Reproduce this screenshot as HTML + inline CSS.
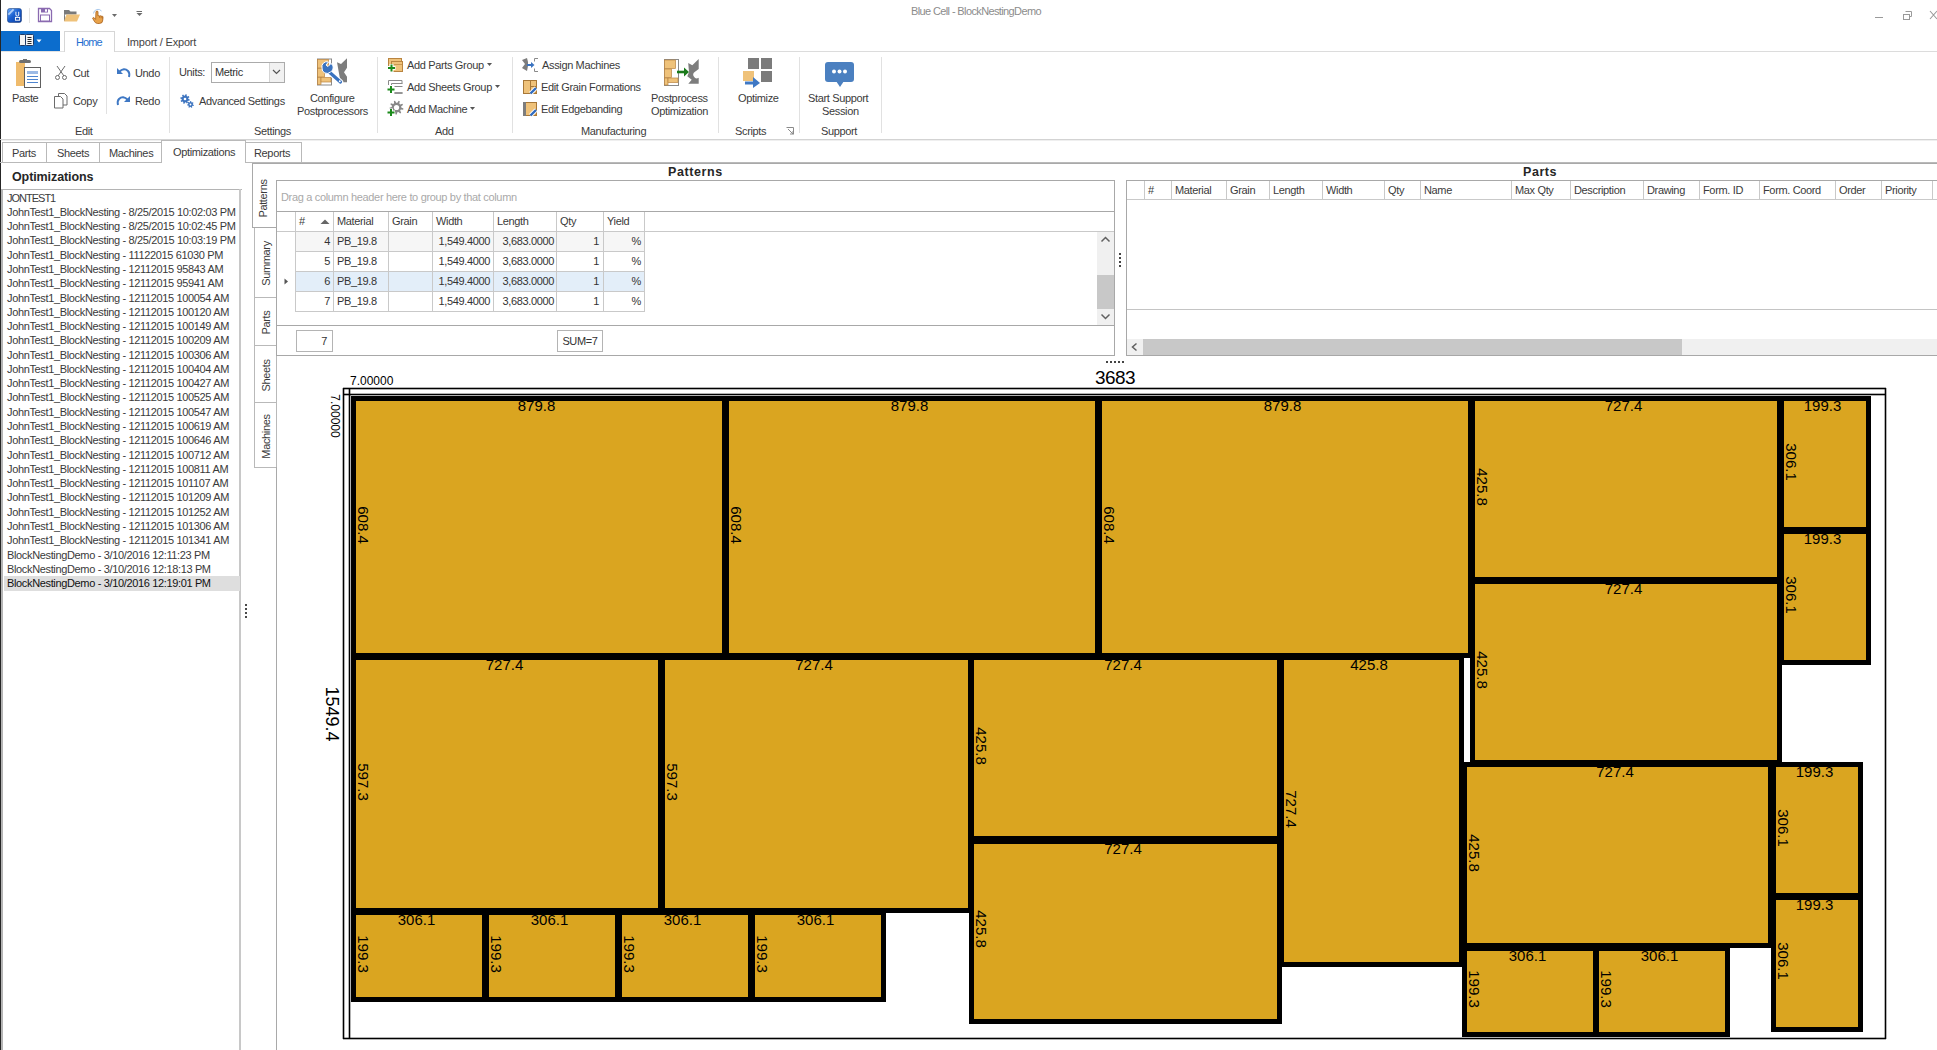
<!DOCTYPE html>
<html><head><meta charset="utf-8"><title>Blue Cell - BlockNestingDemo</title>
<style>
html,body{margin:0;padding:0;}
body{width:1937px;height:1050px;position:relative;overflow:hidden;background:#fff;font-family:"Liberation Sans", sans-serif;font-size:11px;color:#3c3c3c;}
body div{position:absolute;box-sizing:border-box;}
.t{white-space:pre;line-height:13px;letter-spacing:-0.35px;}
.b{font-weight:bold;}
</style></head><body>

<div style="left:0px;top:0px;width:1px;height:1050px;background:#262626;"></div>
<svg style="position:absolute;left:7px;top:8px" width="15" height="15" viewBox="0 0 16 16">
<defs><linearGradient id="ai" x1="0" y1="0" x2="1" y2="1"><stop offset="0" stop-color="#6fb0ff"/><stop offset="0.45" stop-color="#1a5fd0"/><stop offset="1" stop-color="#0b3a9a"/></linearGradient></defs>
<rect x="0.5" y="0.5" width="15" height="15" rx="2.5" fill="url(#ai)" stroke="#1c3f7a" stroke-width="0.6"/>
<path d="M1.5 7 L7 1.5" stroke="#cfe4ff" stroke-width="2" opacity="0.8"/>
<path d="M9.5 4 v4 M12.5 4 v4 M9.5 8 q1.5 1.2 3 0" stroke="#fff" stroke-width="1" fill="none"/>
<rect x="9" y="10" width="4.5" height="3" fill="none" stroke="#fff" stroke-width="1"/>
</svg>
<div style="left:29px;top:8px;width:1px;height:15px;background:#e3e3e3;"></div>
<svg style="position:absolute;left:37px;top:7px" width="16" height="16" viewBox="0 0 16 16">
<path d="M1.5 1.5 h11 l2 2 v11 h-13 z" fill="#fff" stroke="#8a6ab0" stroke-width="1.3"/>
<rect x="4" y="1.5" width="7" height="4" fill="#8a6ab0"/><rect x="8" y="2.3" width="2" height="2.4" fill="#fff"/>
<rect x="3.5" y="8" width="9" height="6" fill="#fff" stroke="#8a6ab0" stroke-width="1"/>
</svg>
<svg style="position:absolute;left:63px;top:8px" width="18" height="15" viewBox="0 0 18 15">
<path d="M1 2 h5 l1.5 1.5 h6 v3 H1 z" fill="#7a7a7a"/><path d="M1 3 v10 h2 z" fill="#7a7a7a"/>
<path d="M3.5 6.5 h13.5 l-3 7 H1 z" fill="#efc27a"/>
</svg>
<svg style="position:absolute;left:91px;top:7px" width="15" height="17" viewBox="0 0 15 17">
<path d="M2.5 6.5 A4.5 4.5 0 0 1 10.5 4" fill="none" stroke="#a9c9ec" stroke-width="1"/>
<path d="M5 4.5 q1-1 2 0 v4.5 q.8-.8 1.6 0 q.8-.7 1.6 .2 q.9-.6 1.6 .4 v3.4 q0 3.5 -3.6 3.5 h-1.6 q-2.2 0 -3.4 -2.4 l-1.6 -3 q.6-.9 1.6-.3 l1.4 1.6 z" fill="#e8a24a" stroke="#a8601a" stroke-width=".8"/>
<path d="M8.6 9 v2 M10.2 9.2 v2 M11.8 9.6 v2" stroke="#a8601a" stroke-width=".6"/>
</svg>
<svg style="position:absolute;left:112px;top:14px" width="6" height="4"><path d="M0 0h5l-2.5 3z" fill="#6b6b6b"/></svg>
<svg style="position:absolute;left:136px;top:11px" width="7" height="7"><path d="M0.5 0.5h5.5" stroke="#6b6b6b" stroke-width="1"/><path d="M0.5 2h6l-3 3z" fill="#6b6b6b"/></svg>
<div class="t" style="left:911px;top:5px;color:#8c8c8c;font-size:11px;letter-spacing:-0.62px;">Blue Cell - BlockNestingDemo</div>
<div style="left:1875px;top:17px;width:8px;height:1px;background:#9a9a9a;"></div>
<svg style="position:absolute;left:1902px;top:10px" width="11" height="11" viewBox="0 0 11 11">
<path d="M3.5 1.5 h6 v5 h-1.5" fill="none" stroke="#9a9a9a" stroke-width="1"/>
<rect x="1.5" y="4.5" width="6" height="5" fill="none" stroke="#9a9a9a" stroke-width="1"/>
</svg>
<svg style="position:absolute;left:1929px;top:10px" width="8" height="10" viewBox="0 0 8 10">
<path d="M1 1 L8 9 M1 9 L8 1" stroke="#9a9a9a" stroke-width="1.1"/>
</svg>
<div style="left:1px;top:31px;width:59px;height:21px;background:#0c6dcd;"></div>
<svg style="position:absolute;left:18px;top:33px" width="26" height="14" viewBox="0 0 26 14"><rect x="1.5" y="1.5" width="6" height="11" rx="1" fill="#f4f4f4" stroke="#1d3a66" stroke-width="1"/><rect x="7.5" y="1.5" width="8" height="11" rx="1" fill="#f4f4f4" stroke="#1d3a66" stroke-width="1"/><path d="M9.5 4.5h4M9.5 6.5h4M9.5 8.5h4M9.5 10.5h4" stroke="#2b2b2b" stroke-width="1"/><path d="M18.5 6.5h5l-2.5 3z" fill="#fff"/></svg>
<div style="left:1px;top:51px;width:63px;height:1px;background:#e2e2e2;"></div>
<div style="left:114px;top:51px;width:1823px;height:1px;background:#dcdcdc;"></div>
<div style="left:64px;top:31px;width:51px;height:21px;border:1px solid #d6d6d6;border-bottom:none;background:#fff;"></div>
<div class="t" style="left:76px;top:36px;font-size:11px;line-height:13px;color:#1f6fd0;letter-spacing:-0.9px;">Home</div>
<div class="t" style="left:127px;top:36px;font-size:11px;line-height:13px;color:#444;letter-spacing:-0.2px;">Import / Export</div>
<div style="left:0px;top:139px;width:1937px;height:1px;background:#d3d3d3;"></div>
<div style="left:1px;top:140px;width:1936px;height:1px;background:#efefef;"></div>
<div style="left:106px;top:60px;width:1px;height:54px;background:#e1e1e1;"></div>
<div style="left:169px;top:57px;width:1px;height:76px;background:#e1e1e1;"></div>
<div style="left:377px;top:57px;width:1px;height:76px;background:#e1e1e1;"></div>
<div style="left:512px;top:57px;width:1px;height:76px;background:#e1e1e1;"></div>
<div style="left:718px;top:57px;width:1px;height:76px;background:#e1e1e1;"></div>
<div style="left:799px;top:57px;width:1px;height:76px;background:#e1e1e1;"></div>
<div style="left:881px;top:57px;width:1px;height:76px;background:#e1e1e1;"></div>
<svg style="position:absolute;left:15px;top:59px" width="28" height="31" viewBox="0 0 28 31"><rect x="1" y="3" width="9" height="24" fill="#efbb6c"/><rect x="4" y="1" width="12" height="3" rx="1.5" fill="#6f6f6f"/><rect x="8" y="0" width="4" height="2" fill="#6f6f6f"/><rect x="9.5" y="8.5" width="16" height="20" fill="#fff" stroke="#5f5f5f" stroke-width="1"/><rect x="12" y="12" width="11" height="3" fill="#9dbbe6"/><path d="M12 17.5h11M12 20.5h11M12 23.5h11" stroke="#4f85cf" stroke-width="1"/></svg>
<div class="t" style="left:12px;top:92px;font-size:11px;line-height:13px;color:#3b3b3b;">Paste</div>
<svg style="position:absolute;left:54px;top:65px" width="14" height="16" viewBox="0 0 14 16"><path d="M3 1 L10 11 M11 1 L4 11" stroke="#6b6b6b" stroke-width="1"/><circle cx="3.5" cy="12.5" r="2" fill="none" stroke="#6b6b6b" stroke-width="1"/><circle cx="10.5" cy="12.5" r="2" fill="none" stroke="#6b6b6b" stroke-width="1"/></svg>
<div class="t" style="left:73px;top:67px;font-size:11px;line-height:13px;color:#3b3b3b;">Cut</div>
<svg style="position:absolute;left:53px;top:92px" width="16" height="18" viewBox="0 0 16 18"><path d="M5.5 1.5h6l2.5 2.5v9h-8.5z" fill="#fff" stroke="#6b6b6b" stroke-width="1"/><path d="M1.5 4.5h6l2.5 2.5v9h-8.5z" fill="#fff" stroke="#6b6b6b" stroke-width="1"/></svg>
<div class="t" style="left:73px;top:95px;font-size:11px;line-height:13px;color:#3b3b3b;">Copy</div>
<svg style="position:absolute;left:116px;top:67px" width="16" height="12" viewBox="0 0 16 12"><path d="M3 5 Q8 0 12 4 Q14 6 13 10" fill="none" stroke="#3f78c4" stroke-width="2"/><path d="M1 1 v6 h6 z" fill="#3f78c4"/></svg>
<div class="t" style="left:135px;top:67px;font-size:11px;line-height:13px;color:#3b3b3b;">Undo</div>
<svg style="position:absolute;left:115px;top:95px" width="16" height="12" viewBox="0 0 16 12"><path d="M13 5 Q8 0 4 4 Q2 6 3 10" fill="none" stroke="#3f78c4" stroke-width="2"/><path d="M15 1 v6 h-6 z" fill="#3f78c4"/></svg>
<div class="t" style="left:135px;top:95px;font-size:11px;line-height:13px;color:#3b3b3b;">Redo</div>
<div class="t" style="left:75px;top:125px;font-size:11px;line-height:13px;color:#3b3b3b;">Edit</div>
<div class="t" style="left:179px;top:66px;font-size:11px;line-height:13px;color:#3b3b3b;">Units:</div>
<div style="left:211px;top:62px;width:74px;height:21px;border:1px solid #ababab;background:#fff;"></div>
<div style="left:269px;top:63px;width:15px;height:19px;background:#f1f1f1;border-left:1px solid #d4d4d4;"></div>
<svg style="position:absolute;left:272px;top:69px" width="9" height="6" viewBox="0 0 9 6"><path d="M1 1 L4.5 4.5 L8 1" fill="none" stroke="#555" stroke-width="1.2"/></svg>
<div class="t" style="left:215px;top:66px;font-size:11px;line-height:13px;color:#333;">Metric</div>
<svg style="position:absolute;left:180px;top:94px" width="14" height="14" viewBox="0 0 14 14"><polygon points="8.40,5.00 9.77,5.56 9.43,6.84 7.97,6.66 7.40,7.40 7.97,8.77 6.84,9.43 5.92,8.27 5.00,8.40 4.44,9.77 3.16,9.43 3.34,7.97 2.60,7.40 1.23,7.97 0.57,6.84 1.73,5.92 1.60,5.00 0.23,4.44 0.57,3.16 2.03,3.34 2.60,2.60 2.03,1.23 3.16,0.57 4.08,1.73 5.00,1.60 5.56,0.23 6.84,0.57 6.66,2.03 7.40,2.60 8.77,2.03 9.43,3.16 8.27,4.08" fill="#3d74bf"/><circle cx="5" cy="5" r="1.3" fill="#fff"/><polygon points="12.90,10.50 13.87,10.96 13.56,11.98 12.50,11.82 12.00,12.38 12.24,13.42 11.26,13.81 10.72,12.89 9.97,12.84 9.31,13.68 8.38,13.16 8.77,12.16 8.34,11.54 7.27,11.55 7.10,10.50 8.12,10.18 8.34,9.46 7.66,8.63 8.38,7.84 9.27,8.44 9.97,8.16 10.20,7.11 11.26,7.19 11.34,8.25 12.00,8.62 12.96,8.15 13.56,9.02 12.78,9.76" fill="#3d74bf"/><circle cx="10.5" cy="10.5" r="0.9" fill="#fff"/></svg>
<div class="t" style="left:199px;top:95px;font-size:11px;line-height:13px;color:#3b3b3b;">Advanced Settings</div>
<svg style="position:absolute;left:316px;top:57px" width="33" height="31" viewBox="0 0 33 31"><g transform="translate(1 1.5)"><rect x="0.5" y="0.5" width="14" height="26" fill="#fff" stroke="#8a8a8a" stroke-width="1"/><rect x="0.5" y="1" width="11" height="8.5" fill="#efc27a" stroke="#b98440" stroke-width="0.7"/><rect x="0.5" y="10" width="7" height="8.5" fill="#efc27a" stroke="#b98440" stroke-width="0.7"/><rect x="0.5" y="19" width="3.5" height="7" fill="#efc27a" stroke="#b98440" stroke-width="0.7"/><rect x="4" y="19" width="10" height="4.5" fill="#efc27a" stroke="#b98440" stroke-width="0.7"/></g><path d="M21 5.3 L25 7 L31 1.3 V10.7 L28 15.3 L31 19.7 V29 V25.3 H21.5 L24 22 Z" fill="#7d7d7d"/><path d="M11 13 L24.5 25" stroke="#fff" stroke-width="5.5" stroke-linecap="round"/><path d="M11 13 L24.5 25" stroke="#3a73c0" stroke-width="3.2" stroke-linecap="round"/><circle cx="23.8" cy="24.3" r="1" fill="#fff"/><path d="M6 11 A5 5 0 0 0 14.5 15 A5 5 0 0 0 15 6.5 L12 9.5 L10 8 L12.5 5 A5 5 0 0 0 6 11 Z" fill="#3a73c0" stroke="#fff" stroke-width="1"/></svg>
<div class="t" style="left:310px;top:92px;font-size:11px;line-height:13px;color:#3b3b3b;">Configure</div>
<div class="t" style="left:297px;top:105px;font-size:11px;line-height:13px;color:#3b3b3b;">Postprocessors</div>
<div class="t" style="left:254px;top:125px;font-size:11px;line-height:13px;color:#3b3b3b;">Settings</div>
<svg style="position:absolute;left:386px;top:57px" width="18" height="17" viewBox="0 0 18 17"><rect x="2.5" y="1.5" width="13" height="9" fill="#efc27a" stroke="#b98440" stroke-width="1"/><rect x="5.5" y="4.5" width="11" height="10" fill="#efc27a" stroke="#b98440" stroke-width="1"/><path d="M5.5 7.5h11" stroke="#b98440" stroke-width="0.7"/><path d="M5.5 7 v8 M1.5 11 h8" stroke="#fff" stroke-width="4"/><path d="M5.5 7.5 v7 M2.0 11 h7" stroke="#1b8a1b" stroke-width="2"/></svg>
<div class="t" style="left:407px;top:59px;font-size:11px;line-height:13px;color:#3b3b3b;">Add Parts Group</div>
<svg style="position:absolute;left:487px;top:63px" width="6" height="4" viewBox="0 0 6 4"><path d="M0 0h5l-2.5 3z" fill="#555"/></svg>
<svg style="position:absolute;left:386px;top:77px" width="18" height="18" viewBox="0 0 18 18"><path d="M2.5 8 V3.5 H16 V6.5 M5.5 8 V6.5 H16.5 M8.5 9.5 H16.5 M8.5 16 H16.5" fill="none" stroke="#8a8a8a" stroke-width="1"/><path d="M8.5 16 H16.5" stroke="#8a8a8a" stroke-width="1.6"/><path d="M5 8.5 v8 M1 12.5 h8" stroke="#fff" stroke-width="4"/><path d="M5 9.0 v7 M1.5 12.5 h7" stroke="#1b8a1b" stroke-width="2"/></svg>
<div class="t" style="left:407px;top:81px;font-size:11px;line-height:13px;color:#3b3b3b;">Add Sheets Group</div>
<svg style="position:absolute;left:495px;top:85px" width="6" height="4" viewBox="0 0 6 4"><path d="M0 0h5l-2.5 3z" fill="#555"/></svg>
<svg style="position:absolute;left:386px;top:100px" width="18" height="18" viewBox="0 0 18 18"><polygon points="15.30,7.50 17.43,8.47 17.16,9.66 14.81,9.60 14.18,10.59 15.18,12.70 14.21,13.44 12.45,11.89 11.33,12.23 10.74,14.50 9.53,14.43 9.18,12.11 8.10,11.66 6.19,13.02 5.30,12.18 6.52,10.18 5.99,9.14 3.65,8.96 3.50,7.74 5.73,7.00 5.99,5.86 4.32,4.21 4.98,3.19 7.17,4.05 8.10,3.34 7.88,1.01 9.04,0.65 10.17,2.71 11.33,2.77 12.66,0.84 13.79,1.32 13.32,3.62 14.18,4.41 16.44,3.79 16.99,4.88 15.16,6.34" fill="#888"/><circle cx="10.5" cy="7.5" r="2.6" fill="#fff"/><path d="M5 8.5 v8 M1 12.5 h8" stroke="#fff" stroke-width="4"/><path d="M5 9.0 v7 M1.5 12.5 h7" stroke="#1b8a1b" stroke-width="2"/></svg>
<div class="t" style="left:407px;top:103px;font-size:11px;line-height:13px;color:#3b3b3b;">Add Machine</div>
<svg style="position:absolute;left:470px;top:107px" width="6" height="4" viewBox="0 0 6 4"><path d="M0 0h5l-2.5 3z" fill="#555"/></svg>
<div class="t" style="left:435px;top:125px;font-size:11px;line-height:13px;color:#3b3b3b;">Add</div>
<svg style="position:absolute;left:521px;top:57px" width="18" height="16" viewBox="0 0 18 16"><path d="M6 1 L1 3 L4 7 L1 11 L6 14 L7 9 L7 5 Z" fill="#7d7d7d"/><path d="M6 8 h5" stroke="#3a73c0" stroke-width="2"/><path d="M10 5 L13.5 8 L10 11z" fill="#3a73c0"/><path d="M17 1.5 H13.5 V4.5 M13.5 11.5 V14.5 H17" fill="none" stroke="#8a8a8a" stroke-width="1"/></svg>
<div class="t" style="left:542px;top:59px;font-size:11px;line-height:13px;color:#3b3b3b;">Assign Machines</div>
<svg style="position:absolute;left:522px;top:79px" width="16" height="17" viewBox="0 0 16 17"><rect x="1.5" y="1.5" width="13" height="13" fill="#efc27a" stroke="#a87838" stroke-width="1"/><path d="M8.5 1.5 V12 M8.5 7.5 H14.5" stroke="#a87838" stroke-width="1"/><path d="M8.5 14.5 L14 9" stroke="#fff" stroke-width="4"/><path d="M8.5 14.5 L14 9" stroke="#2f6bbf" stroke-width="2.4"/><path d="M12.5 14 h2 v-2z" fill="#b98440"/></svg>
<div class="t" style="left:541px;top:81px;font-size:11px;line-height:13px;color:#3b3b3b;">Edit Grain Formations</div>
<svg style="position:absolute;left:522px;top:101px" width="16" height="17" viewBox="0 0 16 17"><rect x="1.5" y="1.5" width="13" height="13" fill="#efc27a" stroke="#a87838" stroke-width="1"/><rect x="1" y="1" width="3" height="14" fill="#7d7d7d"/><path d="M8.5 14.5 L14 9" stroke="#fff" stroke-width="4"/><path d="M8.5 14.5 L14 9" stroke="#2f6bbf" stroke-width="2.4"/><path d="M12.5 14 h2 v-2z" fill="#b98440"/></svg>
<div class="t" style="left:541px;top:103px;font-size:11px;line-height:13px;color:#3b3b3b;">Edit Edgebanding</div>
<svg style="position:absolute;left:660px;top:55px" width="40" height="34" viewBox="0 0 40 34"><g transform="translate(4 4)"><rect x="0.5" y="0.5" width="14" height="26" fill="#fff" stroke="#8a8a8a" stroke-width="1"/><rect x="0.5" y="1" width="11" height="8.5" fill="#efc27a" stroke="#b98440" stroke-width="0.7"/><rect x="0.5" y="10" width="7" height="8.5" fill="#efc27a" stroke="#b98440" stroke-width="0.7"/><rect x="0.5" y="19" width="3.5" height="7" fill="#efc27a" stroke="#b98440" stroke-width="0.7"/><rect x="4" y="19" width="10" height="4.5" fill="#efc27a" stroke="#b98440" stroke-width="0.7"/></g><path d="M28.2 8 L32.3 10.3 L38.7 4 V14 L35 16.7 A3 3 0 0 0 38.7 22.7 V28.7 H28.3 L31.7 24.7 L27.3 21.3 L29 17 Z" fill="#7d7d7d"/><path d="M17 17 h8" stroke="#1a7a1a" stroke-width="2.6"/><path d="M24 12.5 L29 17 L24 21.5z" fill="#1a7a1a"/></svg>
<div class="t" style="left:651px;top:92px;font-size:11px;line-height:13px;color:#3b3b3b;">Postprocess</div>
<div class="t" style="left:651px;top:105px;font-size:11px;line-height:13px;color:#3b3b3b;">Optimization</div>
<div class="t" style="left:581px;top:125px;font-size:11px;line-height:13px;color:#3b3b3b;">Manufacturing</div>
<svg style="position:absolute;left:742px;top:57px" width="31" height="32" viewBox="0 0 31 32"><rect x="6" y="1" width="11" height="11" fill="#7b7b7b"/><rect x="19" y="1" width="11" height="11" fill="#7b7b7b"/><rect x="19" y="14" width="11" height="11" fill="#7b7b7b"/><rect x="1" y="14" width="11" height="10" fill="#efc27a"/><path d="M3 26h10" stroke="#3f78c4" stroke-width="3"/><path d="M11 20 L18 26 L11 31z" fill="#3f78c4"/></svg>
<div class="t" style="left:738px;top:92px;font-size:11px;line-height:13px;color:#3b3b3b;">Optimize</div>
<div class="t" style="left:735px;top:125px;font-size:11px;line-height:13px;color:#3b3b3b;">Scripts</div>
<svg style="position:absolute;left:786px;top:127px" width="9" height="9" viewBox="0 0 9 9"><path d="M0.5 0.5h7v7" fill="none" stroke="#8a8a8a" stroke-width="1"/><path d="M2 2 L7 7 M4 7h3v-3" stroke="#8a8a8a" stroke-width="1" fill="none"/></svg>
<svg style="position:absolute;left:824px;top:61px" width="31" height="27" viewBox="0 0 31 27"><rect x="1" y="1" width="29" height="20" rx="3" fill="#4b80c0"/><path d="M12 20 L16 26 L20 20z" fill="#4b80c0"/><circle cx="10" cy="10.5" r="2" fill="#fff"/><circle cx="15.5" cy="10.5" r="2" fill="#fff"/><circle cx="21" cy="10.5" r="2" fill="#fff"/></svg>
<div class="t" style="left:808px;top:92px;font-size:11px;line-height:13px;color:#3b3b3b;">Start Support</div>
<div class="t" style="left:822px;top:105px;font-size:11px;line-height:13px;color:#3b3b3b;">Session</div>
<div class="t" style="left:821px;top:125px;font-size:11px;line-height:13px;color:#3b3b3b;">Support</div>
<div style="left:2px;top:142px;width:45px;height:21px;border:1px solid #b9b9b9;background:#fff;"></div>
<div class="t" style="left:12px;top:147px;font-size:11px;line-height:13px;color:#3b3b3b;">Parts</div>
<div style="left:46px;top:142px;width:54px;height:21px;border:1px solid #b9b9b9;background:#fff;"></div>
<div class="t" style="left:57px;top:147px;font-size:11px;line-height:13px;color:#3b3b3b;">Sheets</div>
<div style="left:99px;top:142px;width:63px;height:21px;border:1px solid #b9b9b9;background:#fff;"></div>
<div class="t" style="left:109px;top:147px;font-size:11px;line-height:13px;color:#3b3b3b;">Machines</div>
<div style="left:245px;top:142px;width:57px;height:21px;border:1px solid #b9b9b9;background:#fff;"></div>
<div class="t" style="left:254px;top:147px;font-size:11px;line-height:13px;color:#3b3b3b;">Reports</div>
<div style="left:0px;top:162px;width:1937px;height:1px;background:#b9b9b9;"></div>
<div style="left:161px;top:140px;width:85px;height:23px;border:1px solid #b9b9b9;border-bottom:none;background:#fff;"></div>
<div class="t" style="left:173px;top:146px;font-size:11px;line-height:13px;color:#3b3b3b;">Optimizations</div>
<div class="t" style="left:12px;top:170px;font-size:12.5px;line-height:15px;font-weight:bold;color:#262626;letter-spacing:-0.1px;">Optimizations</div>
<div style="left:1px;top:189px;width:241px;height:870px;border-top:1px solid #b4b4b4;"></div>
<div style="left:1px;top:189px;width:2px;height:870px;background:#b5b5b5;"></div>
<div style="left:239px;top:189px;width:2px;height:870px;background:#c8c8c8;"></div>
<div style="left:4px;top:576px;width:236px;height:15px;background:#dedede;"></div>
<div class="t" style="left:7px;top:192px;font-size:11px;line-height:13px;color:#3a3a3a;letter-spacing:-1.0px;">JONTEST1</div>
<div class="t" style="left:7px;top:206px;font-size:11px;line-height:13px;color:#3a3a3a;">JohnTest1_BlockNesting - 8/25/2015 10:02:03 PM</div>
<div class="t" style="left:7px;top:220px;font-size:11px;line-height:13px;color:#3a3a3a;">JohnTest1_BlockNesting - 8/25/2015 10:02:45 PM</div>
<div class="t" style="left:7px;top:234px;font-size:11px;line-height:13px;color:#3a3a3a;">JohnTest1_BlockNesting - 8/25/2015 10:03:19 PM</div>
<div class="t" style="left:7px;top:249px;font-size:11px;line-height:13px;color:#3a3a3a;">JohnTest1_BlockNesting - 11122015 61030 PM</div>
<div class="t" style="left:7px;top:263px;font-size:11px;line-height:13px;color:#3a3a3a;">JohnTest1_BlockNesting - 12112015 95843 AM</div>
<div class="t" style="left:7px;top:277px;font-size:11px;line-height:13px;color:#3a3a3a;">JohnTest1_BlockNesting - 12112015 95941 AM</div>
<div class="t" style="left:7px;top:292px;font-size:11px;line-height:13px;color:#3a3a3a;">JohnTest1_BlockNesting - 12112015 100054 AM</div>
<div class="t" style="left:7px;top:306px;font-size:11px;line-height:13px;color:#3a3a3a;">JohnTest1_BlockNesting - 12112015 100120 AM</div>
<div class="t" style="left:7px;top:320px;font-size:11px;line-height:13px;color:#3a3a3a;">JohnTest1_BlockNesting - 12112015 100149 AM</div>
<div class="t" style="left:7px;top:334px;font-size:11px;line-height:13px;color:#3a3a3a;">JohnTest1_BlockNesting - 12112015 100209 AM</div>
<div class="t" style="left:7px;top:349px;font-size:11px;line-height:13px;color:#3a3a3a;">JohnTest1_BlockNesting - 12112015 100306 AM</div>
<div class="t" style="left:7px;top:363px;font-size:11px;line-height:13px;color:#3a3a3a;">JohnTest1_BlockNesting - 12112015 100404 AM</div>
<div class="t" style="left:7px;top:377px;font-size:11px;line-height:13px;color:#3a3a3a;">JohnTest1_BlockNesting - 12112015 100427 AM</div>
<div class="t" style="left:7px;top:391px;font-size:11px;line-height:13px;color:#3a3a3a;">JohnTest1_BlockNesting - 12112015 100525 AM</div>
<div class="t" style="left:7px;top:406px;font-size:11px;line-height:13px;color:#3a3a3a;">JohnTest1_BlockNesting - 12112015 100547 AM</div>
<div class="t" style="left:7px;top:420px;font-size:11px;line-height:13px;color:#3a3a3a;">JohnTest1_BlockNesting - 12112015 100619 AM</div>
<div class="t" style="left:7px;top:434px;font-size:11px;line-height:13px;color:#3a3a3a;">JohnTest1_BlockNesting - 12112015 100646 AM</div>
<div class="t" style="left:7px;top:449px;font-size:11px;line-height:13px;color:#3a3a3a;">JohnTest1_BlockNesting - 12112015 100712 AM</div>
<div class="t" style="left:7px;top:463px;font-size:11px;line-height:13px;color:#3a3a3a;">JohnTest1_BlockNesting - 12112015 100811 AM</div>
<div class="t" style="left:7px;top:477px;font-size:11px;line-height:13px;color:#3a3a3a;">JohnTest1_BlockNesting - 12112015 101107 AM</div>
<div class="t" style="left:7px;top:491px;font-size:11px;line-height:13px;color:#3a3a3a;">JohnTest1_BlockNesting - 12112015 101209 AM</div>
<div class="t" style="left:7px;top:506px;font-size:11px;line-height:13px;color:#3a3a3a;">JohnTest1_BlockNesting - 12112015 101252 AM</div>
<div class="t" style="left:7px;top:520px;font-size:11px;line-height:13px;color:#3a3a3a;">JohnTest1_BlockNesting - 12112015 101306 AM</div>
<div class="t" style="left:7px;top:534px;font-size:11px;line-height:13px;color:#3a3a3a;">JohnTest1_BlockNesting - 12112015 101341 AM</div>
<div class="t" style="left:7px;top:549px;font-size:11px;line-height:13px;color:#3a3a3a;">BlockNestingDemo - 3/10/2016 12:11:23 PM</div>
<div class="t" style="left:7px;top:563px;font-size:11px;line-height:13px;color:#3a3a3a;">BlockNestingDemo - 3/10/2016 12:18:13 PM</div>
<div class="t" style="left:7px;top:577px;font-size:11px;line-height:13px;color:#111;">BlockNestingDemo - 3/10/2016 12:19:01 PM</div>
<div style="left:245px;top:604px;width:2px;height:2px;background:#4a4a4a;"></div>
<div style="left:245px;top:608px;width:2px;height:2px;background:#4a4a4a;"></div>
<div style="left:245px;top:612px;width:2px;height:2px;background:#4a4a4a;"></div>
<div style="left:245px;top:616px;width:2px;height:2px;background:#4a4a4a;"></div>
<div style="left:254px;top:227px;width:23px;height:71px;border:1px solid #b9b9b9;background:#fff;"></div>
<div class="t" style="left:205.5px;top:257.0px;width:120px;text-align:center;transform:rotate(-90deg);color:#3b3b3b;">Summary</div>
<div style="left:254px;top:297px;width:23px;height:49px;border:1px solid #b9b9b9;background:#fff;"></div>
<div class="t" style="left:205.5px;top:316.0px;width:120px;text-align:center;transform:rotate(-90deg);color:#3b3b3b;">Parts</div>
<div style="left:254px;top:345px;width:23px;height:58px;border:1px solid #b9b9b9;background:#fff;"></div>
<div class="t" style="left:205.5px;top:368.5px;width:120px;text-align:center;transform:rotate(-90deg);color:#3b3b3b;">Sheets</div>
<div style="left:254px;top:402px;width:23px;height:66px;border:1px solid #b9b9b9;background:#fff;"></div>
<div class="t" style="left:205.5px;top:429.5px;width:120px;text-align:center;transform:rotate(-90deg);color:#3b3b3b;">Machines</div>
<div style="left:252px;top:163px;width:25px;height:65px;border:1px solid #a9a9a9;border-right:none;background:#fff;"></div>
<div class="t" style="left:203.2px;top:191.5px;width:120px;text-align:center;transform:rotate(-90deg);color:#3b3b3b;">Patterns</div>
<div style="left:276px;top:467px;width:1px;height:583px;background:#a9a9a9;"></div>
<div style="left:252px;top:163px;width:1685px;height:1px;background:#a9a9a9;"></div>
<div class="t" style="left:668px;top:165px;font-size:12.5px;line-height:15px;font-weight:bold;color:#262626;letter-spacing:0.6px;">Patterns</div>
<div style="left:276px;top:180px;width:839px;height:176px;border:1px solid #a8a8a8;"></div>
<div class="t" style="left:281px;top:191px;font-size:11px;line-height:13px;color:#a9a9a9;letter-spacing:-0.33px;">Drag a column header here to group by that column</div>
<div style="left:277px;top:211px;width:837px;height:1px;background:#a8a8a8;"></div>
<div style="left:277px;top:231px;width:837px;height:1px;background:#c9c9c9;"></div>
<div style="left:296px;top:232px;width:348px;height:19px;background:#f6f6f6;"></div>
<div style="left:296px;top:272px;width:348px;height:19px;background:#e3eef9;"></div>
<div style="left:295px;top:212px;width:1px;height:99px;background:#c9c9c9;"></div>
<div style="left:333px;top:212px;width:1px;height:99px;background:#c9c9c9;"></div>
<div style="left:388px;top:212px;width:1px;height:99px;background:#c9c9c9;"></div>
<div style="left:432px;top:212px;width:1px;height:99px;background:#c9c9c9;"></div>
<div style="left:493px;top:212px;width:1px;height:99px;background:#c9c9c9;"></div>
<div style="left:556px;top:212px;width:1px;height:99px;background:#c9c9c9;"></div>
<div style="left:603px;top:212px;width:1px;height:99px;background:#c9c9c9;"></div>
<div style="left:644px;top:212px;width:1px;height:99px;background:#c9c9c9;"></div>
<div class="t" style="left:299px;top:215px;font-size:11px;line-height:13px;color:#3b3b3b;">#</div>
<div class="t" style="left:337px;top:215px;font-size:11px;line-height:13px;color:#3b3b3b;">Material</div>
<div class="t" style="left:392px;top:215px;font-size:11px;line-height:13px;color:#3b3b3b;">Grain</div>
<div class="t" style="left:436px;top:215px;font-size:11px;line-height:13px;color:#3b3b3b;">Width</div>
<div class="t" style="left:497px;top:215px;font-size:11px;line-height:13px;color:#3b3b3b;">Length</div>
<div class="t" style="left:560px;top:215px;font-size:11px;line-height:13px;color:#3b3b3b;">Qty</div>
<div class="t" style="left:607px;top:215px;font-size:11px;line-height:13px;color:#3b3b3b;">Yield</div>
<svg style="position:absolute;left:320px;top:219px" width="10" height="6" viewBox="0 0 10 6"><path d="M0.5 5h9l-4.5-4.5z" fill="#666"/></svg>
<div style="left:295px;top:251px;width:350px;height:1px;background:#c9c9c9;"></div>
<div class="t" style="left:295px;top:235px;font-size:11px;line-height:13px;width:35px;text-align:right;color:#333;">4</div>
<div class="t" style="left:337px;top:235px;font-size:11px;line-height:13px;color:#333;">PB_19.8</div>
<div class="t" style="left:432px;top:235px;font-size:11px;line-height:13px;width:58px;text-align:right;color:#333;">1,549.4000</div>
<div class="t" style="left:493px;top:235px;font-size:11px;line-height:13px;width:61px;text-align:right;color:#333;">3,683.0000</div>
<div class="t" style="left:556px;top:235px;font-size:11px;line-height:13px;width:43px;text-align:right;color:#333;">1</div>
<div class="t" style="left:603px;top:235px;font-size:11px;line-height:13px;width:38px;text-align:right;color:#333;">%</div>
<div style="left:295px;top:271px;width:350px;height:1px;background:#c9c9c9;"></div>
<div class="t" style="left:295px;top:255px;font-size:11px;line-height:13px;width:35px;text-align:right;color:#333;">5</div>
<div class="t" style="left:337px;top:255px;font-size:11px;line-height:13px;color:#333;">PB_19.8</div>
<div class="t" style="left:432px;top:255px;font-size:11px;line-height:13px;width:58px;text-align:right;color:#333;">1,549.4000</div>
<div class="t" style="left:493px;top:255px;font-size:11px;line-height:13px;width:61px;text-align:right;color:#333;">3,683.0000</div>
<div class="t" style="left:556px;top:255px;font-size:11px;line-height:13px;width:43px;text-align:right;color:#333;">1</div>
<div class="t" style="left:603px;top:255px;font-size:11px;line-height:13px;width:38px;text-align:right;color:#333;">%</div>
<div style="left:295px;top:291px;width:350px;height:1px;background:#c9c9c9;"></div>
<div class="t" style="left:295px;top:275px;font-size:11px;line-height:13px;width:35px;text-align:right;color:#333;">6</div>
<div class="t" style="left:337px;top:275px;font-size:11px;line-height:13px;color:#333;">PB_19.8</div>
<div class="t" style="left:432px;top:275px;font-size:11px;line-height:13px;width:58px;text-align:right;color:#333;">1,549.4000</div>
<div class="t" style="left:493px;top:275px;font-size:11px;line-height:13px;width:61px;text-align:right;color:#333;">3,683.0000</div>
<div class="t" style="left:556px;top:275px;font-size:11px;line-height:13px;width:43px;text-align:right;color:#333;">1</div>
<div class="t" style="left:603px;top:275px;font-size:11px;line-height:13px;width:38px;text-align:right;color:#333;">%</div>
<div style="left:295px;top:311px;width:350px;height:1px;background:#c9c9c9;"></div>
<div class="t" style="left:295px;top:295px;font-size:11px;line-height:13px;width:35px;text-align:right;color:#333;">7</div>
<div class="t" style="left:337px;top:295px;font-size:11px;line-height:13px;color:#333;">PB_19.8</div>
<div class="t" style="left:432px;top:295px;font-size:11px;line-height:13px;width:58px;text-align:right;color:#333;">1,549.4000</div>
<div class="t" style="left:493px;top:295px;font-size:11px;line-height:13px;width:61px;text-align:right;color:#333;">3,683.0000</div>
<div class="t" style="left:556px;top:295px;font-size:11px;line-height:13px;width:43px;text-align:right;color:#333;">1</div>
<div class="t" style="left:603px;top:295px;font-size:11px;line-height:13px;width:38px;text-align:right;color:#333;">%</div>
<svg style="position:absolute;left:284px;top:278px" width="5" height="7" viewBox="0 0 5 7"><path d="M0.5 0.5v6l3.5-3z" fill="#555"/></svg>
<div style="left:1097px;top:232px;width:17px;height:93px;background:#f0f0f0;"></div>
<div style="left:1097px;top:275px;width:17px;height:34px;background:#c8c8c8;"></div>
<svg style="position:absolute;left:1100px;top:235px" width="11" height="8" viewBox="0 0 11 8"><path d="M1.5 6.5 L5.5 2.5 L9.5 6.5" fill="none" stroke="#606060" stroke-width="1.5"/></svg>
<svg style="position:absolute;left:1100px;top:313px" width="11" height="8" viewBox="0 0 11 8"><path d="M1.5 1.5 L5.5 5.5 L9.5 1.5" fill="none" stroke="#606060" stroke-width="1.5"/></svg>
<div style="left:277px;top:325px;width:837px;height:1px;background:#a8a8a8;"></div>
<div style="left:296px;top:330px;width:37px;height:22px;border:1px solid #b4b4b4;"></div>
<div class="t" style="left:296px;top:335px;font-size:11px;line-height:13px;width:31px;text-align:right;color:#333;">7</div>
<div style="left:557px;top:330px;width:46px;height:22px;border:1px solid #b4b4b4;"></div>
<div class="t" style="left:557px;top:335px;font-size:11px;line-height:13px;width:46px;text-align:center;color:#333;">SUM=7</div>
<div style="left:1119px;top:253px;width:2px;height:2px;background:#444;"></div>
<div style="left:1119px;top:257px;width:2px;height:2px;background:#444;"></div>
<div style="left:1119px;top:261px;width:2px;height:2px;background:#444;"></div>
<div style="left:1119px;top:265px;width:2px;height:2px;background:#444;"></div>
<div style="left:1106px;top:361px;width:2px;height:2px;background:#444;"></div>
<div style="left:1110px;top:361px;width:2px;height:2px;background:#444;"></div>
<div style="left:1114px;top:361px;width:2px;height:2px;background:#444;"></div>
<div style="left:1118px;top:361px;width:2px;height:2px;background:#444;"></div>
<div style="left:1122px;top:361px;width:2px;height:2px;background:#444;"></div>
<div class="t" style="left:1523px;top:165px;font-size:12.5px;line-height:15px;font-weight:bold;color:#262626;letter-spacing:0.55px;">Parts</div>
<div style="left:1126px;top:180px;width:820px;height:176px;border:1px solid #a8a8a8;"></div>
<div style="left:1127px;top:199px;width:810px;height:1px;background:#c9c9c9;"></div>
<div style="left:1144px;top:181px;width:1px;height:19px;background:#c9c9c9;"></div>
<div style="left:1171px;top:181px;width:1px;height:19px;background:#c9c9c9;"></div>
<div style="left:1226px;top:181px;width:1px;height:19px;background:#c9c9c9;"></div>
<div style="left:1269px;top:181px;width:1px;height:19px;background:#c9c9c9;"></div>
<div style="left:1322px;top:181px;width:1px;height:19px;background:#c9c9c9;"></div>
<div style="left:1384px;top:181px;width:1px;height:19px;background:#c9c9c9;"></div>
<div style="left:1420px;top:181px;width:1px;height:19px;background:#c9c9c9;"></div>
<div style="left:1511px;top:181px;width:1px;height:19px;background:#c9c9c9;"></div>
<div style="left:1570px;top:181px;width:1px;height:19px;background:#c9c9c9;"></div>
<div style="left:1643px;top:181px;width:1px;height:19px;background:#c9c9c9;"></div>
<div style="left:1699px;top:181px;width:1px;height:19px;background:#c9c9c9;"></div>
<div style="left:1759px;top:181px;width:1px;height:19px;background:#c9c9c9;"></div>
<div style="left:1835px;top:181px;width:1px;height:19px;background:#c9c9c9;"></div>
<div style="left:1881px;top:181px;width:1px;height:19px;background:#c9c9c9;"></div>
<div style="left:1932px;top:181px;width:1px;height:19px;background:#c9c9c9;"></div>
<div class="t" style="left:1148px;top:184px;font-size:11px;line-height:13px;color:#3b3b3b;">#</div>
<div class="t" style="left:1175px;top:184px;font-size:11px;line-height:13px;color:#3b3b3b;">Material</div>
<div class="t" style="left:1230px;top:184px;font-size:11px;line-height:13px;color:#3b3b3b;">Grain</div>
<div class="t" style="left:1273px;top:184px;font-size:11px;line-height:13px;color:#3b3b3b;">Length</div>
<div class="t" style="left:1326px;top:184px;font-size:11px;line-height:13px;color:#3b3b3b;">Width</div>
<div class="t" style="left:1388px;top:184px;font-size:11px;line-height:13px;color:#3b3b3b;">Qty</div>
<div class="t" style="left:1424px;top:184px;font-size:11px;line-height:13px;color:#3b3b3b;">Name</div>
<div class="t" style="left:1515px;top:184px;font-size:11px;line-height:13px;color:#3b3b3b;">Max Qty</div>
<div class="t" style="left:1574px;top:184px;font-size:11px;line-height:13px;color:#3b3b3b;">Description</div>
<div class="t" style="left:1647px;top:184px;font-size:11px;line-height:13px;color:#3b3b3b;">Drawing</div>
<div class="t" style="left:1703px;top:184px;font-size:11px;line-height:13px;color:#3b3b3b;">Form. ID</div>
<div class="t" style="left:1763px;top:184px;font-size:11px;line-height:13px;color:#3b3b3b;">Form. Coord</div>
<div class="t" style="left:1839px;top:184px;font-size:11px;line-height:13px;color:#3b3b3b;">Order</div>
<div class="t" style="left:1885px;top:184px;font-size:11px;line-height:13px;color:#3b3b3b;">Priority</div>
<div style="left:1127px;top:309px;width:810px;height:1px;background:#c4c4c4;"></div>
<div style="left:1127px;top:339px;width:810px;height:16px;background:#f0f0f0;"></div>
<div style="left:1143px;top:339px;width:539px;height:16px;background:#c8c8c8;"></div>
<svg style="position:absolute;left:1130px;top:342px" width="9" height="10" viewBox="0 0 9 10"><path d="M6.5 1.5 L2.5 5 L6.5 8.5" fill="none" stroke="#606060" stroke-width="1.5"/></svg>
<svg style="position:absolute;left:0;top:0" width="1937" height="1050" viewBox="0 0 1937 1050">
<rect x="343" y="387" width="1543" height="3" fill="#000" opacity="0.3"/>
<rect x="343" y="388" width="1543" height="1" fill="#000"/>
<rect x="343" y="393" width="1543" height="3" fill="#000" opacity="0.3"/>
<rect x="343" y="394" width="1543" height="1" fill="#000"/>
<rect x="343" y="1037" width="1543" height="3" fill="#000" opacity="0.3"/>
<rect x="343" y="1038" width="1543" height="1" fill="#000"/>
<rect x="342" y="388" width="3" height="651" fill="#000" opacity="0.3"/>
<rect x="343" y="388" width="1" height="651" fill="#000"/>
<rect x="348" y="388" width="3" height="651" fill="#000" opacity="0.3"/>
<rect x="349" y="388" width="1" height="651" fill="#000"/>
<rect x="1884" y="388" width="3" height="651" fill="#000" opacity="0.3"/>
<rect x="1885" y="388" width="1" height="651" fill="#000"/>
<rect x="351" y="396" width="376" height="262" fill="#000"/>
<rect x="724" y="396" width="376" height="262" fill="#000"/>
<rect x="1097" y="396" width="376" height="262" fill="#000"/>
<rect x="1470" y="396" width="312" height="186" fill="#000"/>
<rect x="1470" y="579" width="312" height="186" fill="#000"/>
<rect x="1779" y="396" width="92" height="136" fill="#000"/>
<rect x="1779" y="529" width="92" height="136" fill="#000"/>
<rect x="351" y="655" width="312" height="258" fill="#000"/>
<rect x="660" y="655" width="313" height="258" fill="#000"/>
<rect x="969" y="655" width="313" height="186" fill="#000"/>
<rect x="969" y="839" width="313" height="185" fill="#000"/>
<rect x="1279" y="655" width="185" height="312" fill="#000"/>
<rect x="1462" y="762" width="311" height="186" fill="#000"/>
<rect x="1771" y="762" width="92" height="136" fill="#000"/>
<rect x="1771" y="895" width="92" height="137" fill="#000"/>
<rect x="1462" y="946" width="136" height="91" fill="#000"/>
<rect x="1594" y="946" width="136" height="91" fill="#000"/>
<rect x="351" y="910" width="136" height="92" fill="#000"/>
<rect x="484" y="910" width="136" height="92" fill="#000"/>
<rect x="617" y="910" width="136" height="92" fill="#000"/>
<rect x="750" y="910" width="136" height="92" fill="#000"/>
<rect x="356" y="401" width="366" height="252" fill="#daa520"/>
<rect x="729" y="401" width="366" height="252" fill="#daa520"/>
<rect x="1102" y="401" width="366" height="252" fill="#daa520"/>
<rect x="1475" y="401" width="302" height="176" fill="#daa520"/>
<rect x="1475" y="584" width="302" height="176" fill="#daa520"/>
<rect x="1784" y="401" width="82" height="126" fill="#daa520"/>
<rect x="1784" y="534" width="82" height="126" fill="#daa520"/>
<rect x="356" y="660" width="302" height="248" fill="#daa520"/>
<rect x="665" y="660" width="303" height="248" fill="#daa520"/>
<rect x="974" y="660" width="303" height="176" fill="#daa520"/>
<rect x="974" y="844" width="303" height="175" fill="#daa520"/>
<rect x="1284" y="660" width="175" height="302" fill="#daa520"/>
<rect x="1467" y="767" width="301" height="176" fill="#daa520"/>
<rect x="1776" y="767" width="82" height="126" fill="#daa520"/>
<rect x="1776" y="900" width="82" height="127" fill="#daa520"/>
<rect x="1467" y="951" width="126" height="81" fill="#daa520"/>
<rect x="1599" y="951" width="126" height="81" fill="#daa520"/>
<rect x="356" y="915" width="126" height="82" fill="#daa520"/>
<rect x="489" y="915" width="126" height="82" fill="#daa520"/>
<rect x="622" y="915" width="126" height="82" fill="#daa520"/>
<rect x="755" y="915" width="126" height="82" fill="#daa520"/>
</svg>
<div class="t" style="left:476.5px;top:397.04px;width:120px;text-align:center;font-size:15px;line-height:18px;color:#000;letter-spacing:0;">879.8</div>
<div class="t" style="left:302.96px;top:515.50px;width:120px;height:18px;text-align:center;font-size:15px;line-height:18px;transform:rotate(90deg);color:#000;letter-spacing:0;">608.4</div>
<div class="t" style="left:849.5px;top:397.04px;width:120px;text-align:center;font-size:15px;line-height:18px;color:#000;letter-spacing:0;">879.8</div>
<div class="t" style="left:675.96px;top:515.50px;width:120px;height:18px;text-align:center;font-size:15px;line-height:18px;transform:rotate(90deg);color:#000;letter-spacing:0;">608.4</div>
<div class="t" style="left:1222.5px;top:397.04px;width:120px;text-align:center;font-size:15px;line-height:18px;color:#000;letter-spacing:0;">879.8</div>
<div class="t" style="left:1048.96px;top:515.50px;width:120px;height:18px;text-align:center;font-size:15px;line-height:18px;transform:rotate(90deg);color:#000;letter-spacing:0;">608.4</div>
<div class="t" style="left:1563.5px;top:397.04px;width:120px;text-align:center;font-size:15px;line-height:18px;color:#000;letter-spacing:0;">727.4</div>
<div class="t" style="left:1421.96px;top:477.50px;width:120px;height:18px;text-align:center;font-size:15px;line-height:18px;transform:rotate(90deg);color:#000;letter-spacing:0;">425.8</div>
<div class="t" style="left:1563.5px;top:580.04px;width:120px;text-align:center;font-size:15px;line-height:18px;color:#000;letter-spacing:0;">727.4</div>
<div class="t" style="left:1421.96px;top:660.50px;width:120px;height:18px;text-align:center;font-size:15px;line-height:18px;transform:rotate(90deg);color:#000;letter-spacing:0;">425.8</div>
<div class="t" style="left:1762.5px;top:397.04px;width:120px;text-align:center;font-size:15px;line-height:18px;color:#000;letter-spacing:0;">199.3</div>
<div class="t" style="left:1730.96px;top:452.50px;width:120px;height:18px;text-align:center;font-size:15px;line-height:18px;transform:rotate(90deg);color:#000;letter-spacing:0;">306.1</div>
<div class="t" style="left:1762.5px;top:530.04px;width:120px;text-align:center;font-size:15px;line-height:18px;color:#000;letter-spacing:0;">199.3</div>
<div class="t" style="left:1730.96px;top:585.50px;width:120px;height:18px;text-align:center;font-size:15px;line-height:18px;transform:rotate(90deg);color:#000;letter-spacing:0;">306.1</div>
<div class="t" style="left:444.5px;top:656.04px;width:120px;text-align:center;font-size:15px;line-height:18px;color:#000;letter-spacing:0;">727.4</div>
<div class="t" style="left:302.96px;top:772.50px;width:120px;height:18px;text-align:center;font-size:15px;line-height:18px;transform:rotate(90deg);color:#000;letter-spacing:0;">597.3</div>
<div class="t" style="left:754.0px;top:656.04px;width:120px;text-align:center;font-size:15px;line-height:18px;color:#000;letter-spacing:0;">727.4</div>
<div class="t" style="left:611.96px;top:772.50px;width:120px;height:18px;text-align:center;font-size:15px;line-height:18px;transform:rotate(90deg);color:#000;letter-spacing:0;">597.3</div>
<div class="t" style="left:1063.0px;top:656.04px;width:120px;text-align:center;font-size:15px;line-height:18px;color:#000;letter-spacing:0;">727.4</div>
<div class="t" style="left:920.96px;top:736.50px;width:120px;height:18px;text-align:center;font-size:15px;line-height:18px;transform:rotate(90deg);color:#000;letter-spacing:0;">425.8</div>
<div class="t" style="left:1063.0px;top:840.04px;width:120px;text-align:center;font-size:15px;line-height:18px;color:#000;letter-spacing:0;">727.4</div>
<div class="t" style="left:920.96px;top:920.00px;width:120px;height:18px;text-align:center;font-size:15px;line-height:18px;transform:rotate(90deg);color:#000;letter-spacing:0;">425.8</div>
<div class="t" style="left:1309.0px;top:656.04px;width:120px;text-align:center;font-size:15px;line-height:18px;color:#000;letter-spacing:0;">425.8</div>
<div class="t" style="left:1230.96px;top:799.50px;width:120px;height:18px;text-align:center;font-size:15px;line-height:18px;transform:rotate(90deg);color:#000;letter-spacing:0;">727.4</div>
<div class="t" style="left:1555.0px;top:763.04px;width:120px;text-align:center;font-size:15px;line-height:18px;color:#000;letter-spacing:0;">727.4</div>
<div class="t" style="left:1413.96px;top:843.50px;width:120px;height:18px;text-align:center;font-size:15px;line-height:18px;transform:rotate(90deg);color:#000;letter-spacing:0;">425.8</div>
<div class="t" style="left:1754.5px;top:763.04px;width:120px;text-align:center;font-size:15px;line-height:18px;color:#000;letter-spacing:0;">199.3</div>
<div class="t" style="left:1722.96px;top:818.50px;width:120px;height:18px;text-align:center;font-size:15px;line-height:18px;transform:rotate(90deg);color:#000;letter-spacing:0;">306.1</div>
<div class="t" style="left:1754.5px;top:896.04px;width:120px;text-align:center;font-size:15px;line-height:18px;color:#000;letter-spacing:0;">199.3</div>
<div class="t" style="left:1722.96px;top:952.00px;width:120px;height:18px;text-align:center;font-size:15px;line-height:18px;transform:rotate(90deg);color:#000;letter-spacing:0;">306.1</div>
<div class="t" style="left:1467.5px;top:947.04px;width:120px;text-align:center;font-size:15px;line-height:18px;color:#000;letter-spacing:0;">306.1</div>
<div class="t" style="left:1413.96px;top:980.00px;width:120px;height:18px;text-align:center;font-size:15px;line-height:18px;transform:rotate(90deg);color:#000;letter-spacing:0;">199.3</div>
<div class="t" style="left:1599.5px;top:947.04px;width:120px;text-align:center;font-size:15px;line-height:18px;color:#000;letter-spacing:0;">306.1</div>
<div class="t" style="left:1545.96px;top:980.00px;width:120px;height:18px;text-align:center;font-size:15px;line-height:18px;transform:rotate(90deg);color:#000;letter-spacing:0;">199.3</div>
<div class="t" style="left:356.5px;top:911.04px;width:120px;text-align:center;font-size:15px;line-height:18px;color:#000;letter-spacing:0;">306.1</div>
<div class="t" style="left:302.96px;top:944.50px;width:120px;height:18px;text-align:center;font-size:15px;line-height:18px;transform:rotate(90deg);color:#000;letter-spacing:0;">199.3</div>
<div class="t" style="left:489.5px;top:911.04px;width:120px;text-align:center;font-size:15px;line-height:18px;color:#000;letter-spacing:0;">306.1</div>
<div class="t" style="left:435.96px;top:944.50px;width:120px;height:18px;text-align:center;font-size:15px;line-height:18px;transform:rotate(90deg);color:#000;letter-spacing:0;">199.3</div>
<div class="t" style="left:622.5px;top:911.04px;width:120px;text-align:center;font-size:15px;line-height:18px;color:#000;letter-spacing:0;">306.1</div>
<div class="t" style="left:568.96px;top:944.50px;width:120px;height:18px;text-align:center;font-size:15px;line-height:18px;transform:rotate(90deg);color:#000;letter-spacing:0;">199.3</div>
<div class="t" style="left:755.5px;top:911.04px;width:120px;text-align:center;font-size:15px;line-height:18px;color:#000;letter-spacing:0;">306.1</div>
<div class="t" style="left:701.96px;top:944.50px;width:120px;height:18px;text-align:center;font-size:15px;line-height:18px;transform:rotate(90deg);color:#000;letter-spacing:0;">199.3</div>
<div class="t" style="left:1055.0px;top:366.22px;width:120px;text-align:center;font-size:19px;line-height:23px;color:#000;letter-spacing:0;letter-spacing:-0.55px;">3683</div>
<div class="t" style="left:271.95px;top:703.20px;width:120px;height:22px;text-align:center;font-size:18px;line-height:22px;transform:rotate(90deg);color:#000;letter-spacing:0;">1549.4</div>
<div class="t" style="left:350px;top:374.3px;font-size:12px;line-height:14px;color:#000;letter-spacing:0;">7.00000</div>
<div class="t" style="left:274.97px;top:409.40px;width:120px;height:14px;text-align:center;font-size:12px;line-height:14px;transform:rotate(90deg);color:#000;letter-spacing:0;">7.00000</div>
</body></html>
